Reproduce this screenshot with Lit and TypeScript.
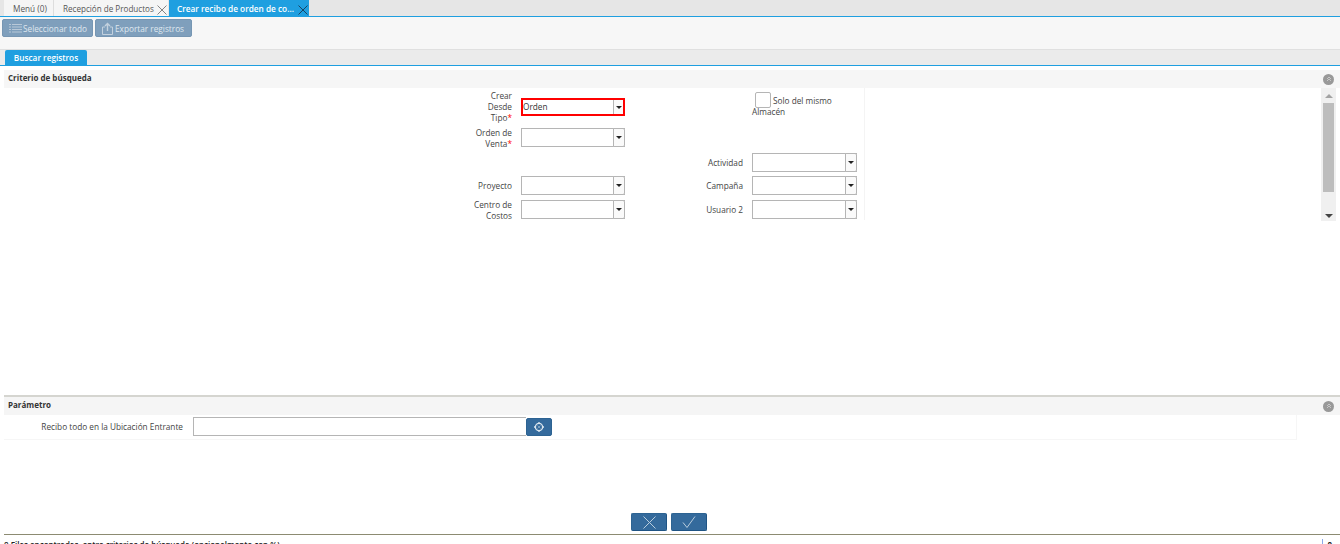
import { LitElement, html, css } from "lit";
import { customElement } from "lit/decorators.js";

const closeIcon = (stroke: string) => html`<svg class="x" viewBox="0 0 10 10" width="10" height="10"><path d="M.5.5l9 9M9.5.5l-9 9" fill="none" stroke=${stroke} stroke-width=".9"/></svg>`;
const collapse = html`<span class="collapse"><svg viewBox="0 0 6 6" width="6" height="6"><path d="M1 3l2-2 2 2M1 5l2-2 2 2" fill="none" stroke="#ccc" stroke-width=".9"/></svg></span>`;

@customElement("app-root")
export class AppRoot extends LitElement {
  static styles = css`
    :host { display: block; width: 1340px; height: 544px; overflow: hidden; background: #fff; color: #333;
      font-family: "Open Sans", sans-serif; font-size: 8.25px; line-height: 11px; }
    .tabs { height: 16px; background: #e6e6e6; border-bottom: 1px solid #1f9fe0; display: flex; padding-left: 4px; box-sizing: content-box; }
    .tab { height: 16px; display: flex; align-items: center; background: #f5f5f5; color: #555; padding: 0 0 0 9px; white-space: nowrap; box-sizing: border-box; }
    .tab .x { align-self: flex-end; margin-bottom: 1px; margin-right: 1px; flex: none; }
    .tab.t1 { width: 50px; border-right: 1px solid #ddd; }
    .tab.t2 { width: 114px; margin-right: 1px; padding-left: 9px; justify-content: space-between; font-size: 8.1px; }
    .tab.t3 { width: 140px; background: #1f9fe0; color: #fff; font-weight: 600; padding-left: 8px; justify-content: space-between; }
    .toolbar { height: 32px; background: #f7f7f7; padding: 2px 0 0 2px; display: flex; gap: 2px; box-sizing: border-box; align-items: flex-start; }
    .tbtn { height: 18px; background: #7f9fbc; border-radius: 2px; color: #dfe7ef; display: flex; align-items: center; box-sizing: border-box; border: 1px solid #7696b3; white-space: nowrap; }
    .tbtn.sel { width: 91px; padding-left: 6px; gap: 1px; }
    .tbtn.exp { width: 97px; padding-left: 6px; gap: 2px; }
    .subtabs { height: 17px; background: #ebebeb; border-top: 1px solid #e0e0e0; border-bottom: 1px solid #1f9fe0; padding-left: 5px; display: flex; align-items: flex-end; box-sizing: border-box; }
    .subtab { width: 82px; height: 15px; background: #1f9fe0; color: #fff; font-weight: 600; display: flex; align-items: center; justify-content: center; border-radius: 2px 2px 0 0; }
    .head { margin-left: 4px; height: 18px; background: #f6f6f6; display: flex; align-items: center; justify-content: space-between; padding: 0 6px 3px 4px; box-sizing: border-box; color: #333; font-weight: 700; font-size: 8px; }
    .collapse { width: 11px; height: 11px; border-radius: 50%; background: #999; display: flex; align-items: center; justify-content: center; margin-top: 2px; margin-bottom: -1px; }
    .g1 { margin-top: 4px; }
    .search { height: 307px; display: flex; justify-content: space-between; align-items: flex-start; }
    .formwrap { margin-left: 462px; width: 403px; height: 132px; border-right: 1px solid #f4f4f4; box-sizing: border-box; }
    .form { display: grid; grid-template-columns: 50px 104px 109px 105px; column-gap: 9px; grid-template-rows: 36px 25px 25px 21px 27px; padding-top: 1px; width: 395px; }
    .form > * { align-self: center; }
    .lab { text-align: right; color: #444; }
    .lab.top { padding-bottom: 2px; }
    .req { color: #f00; }
    .combo { height: 19px; display: flex; box-sizing: border-box; border: 1px solid #b5b5b5; border-right: none; background: #fff; align-items: center; }
    .combo .val { flex: 1; color: #333; }
    .arrow { width: 12px; height: 19px; margin-top: -1px; margin-bottom: -1px; border: 1px solid #b5b5b5; border-radius: 0 2px 2px 0; box-sizing: border-box; display: flex; align-items: center; justify-content: center; background: #fafafa; }
    .arrow i { border: 3px solid transparent; border-top: 3px solid #222; border-bottom: 0; width: 0; height: 0; display: block; }
    .combo.err { height: 18px; border: 2px solid #f00; border-radius: 0; }
    .combo.err .val { padding-bottom: 2px; }
    .combo.err .arrow { border: none; border-left: 1px solid #b5b5b5; height: 14px; width: 10px; margin: 0; border-radius: 0; }
    .check { grid-column: 3 / 5; margin-left: 118px; align-self: start !important; margin-top: 3px; color: #444; }
    .empty { grid-column: 3 / 5; }
    .box { display: inline-block; width: 16px; height: 16px; border: 1px solid #b5b5b5; border-radius: 2px; box-sizing: border-box; vertical-align: -2px; margin: 0 2px -2px 3px; background: #fff; }
    .scroll { width: 15px; height: 133px; margin-right: 4px; background: #f0f0f0; display: flex; flex-direction: column; align-items: center; justify-content: space-between; padding: 6px 0 3px; box-sizing: border-box; position: relative; }
    .thumb { position: absolute; left: 2px; top: 15px; width: 11px; height: 89px; background: #bdbdbd; }
    .up { border: 4px solid transparent; border-bottom: 4px solid #a3a3a3; border-top: 0; width: 0; height: 0; }
    .down { border: 4px solid transparent; border-top: 4px solid #444; border-bottom: 0; width: 0; height: 0; }
    .g2 { border-top: 2px solid #d5d5d0; height: 20px; margin-left: 4px; background: #f5f5f5; display: flex; align-items: center; justify-content: space-between; padding: 0 6px 3px 4px; font-weight: 700; font-size: 8px; box-sizing: border-box; }
    .param { width: 1293px; margin-left: 4px; height: 25px; padding-bottom: 2px; border-bottom: 1px solid #f6f6f6; border-right: 1px solid #f6f6f6; display: flex; align-items: center; box-sizing: border-box; }
    .plab { width: 179px; text-align: right; color: #444; }
    .pinput { margin-left: 10px; width: 333px; height: 19px; border: 1px solid #b5b5b5; border-right: none; box-sizing: border-box; }
    .pbtn { width: 26px; height: 18px; background: #346a9c; border-radius: 2px; display: flex; align-items: center; justify-content: center; border: 1px solid #2d6392; box-sizing: border-box; margin-top: 1px; }
    .actions { height: 18px; margin-top: 73px; display: flex; gap: 4px; padding-left: 631px; }
    .abtn { width: 36px; height: 18px; background: #346a9c; border-radius: 2px; display: flex; align-items: center; justify-content: center; border: 1px solid #2d6392; border-right-color: #1f5484; border-bottom-color: #1f5484; box-sizing: border-box; }
    .status { margin: 3px 0 0 4px; border-top: 1px solid #8c8b72; height: 12px; display: flex; justify-content: space-between; padding-top: 4px; font-weight: 600; font-size: 8px; color: #222; white-space: nowrap; }
    .sep { border-left: 1px solid #8aa8e8; padding-left: 4px; margin-right: 8px; font-weight: 700; }
  `;

  combo(val = "", err = false) {
    return html`<div class="combo ${err ? "err" : ""}"><span class="val">${val}</span><span class="arrow"><i></i></span></div>`;
  }

  render() {
    return html`
      <div class="tabs">
        <div class="tab t1">Menú (0)</div>
        <div class="tab t2">Recepción de Productos ${closeIcon("#777")}</div>
        <div class="tab t3">Crear recibo de orden de co... ${closeIcon("#163a55")}</div>
      </div>
      <div class="toolbar">
        <div class="tbtn sel">
          <svg width="13" height="11" viewBox="0 0 13 11"><path d="M0 1.5h2M3 1.5h10M0 4h2M3 4h10M0 6.5h2M3 6.5h10M0 9h2M3 9h10" stroke="#b9c9d8" stroke-width="1" fill="none"/></svg>
          Seleccionar todo
        </div>
        <div class="tbtn exp">
          <svg width="11" height="13" viewBox="0 0 11 13"><path d="M3 5H.5v7.5h10V5H8" fill="none" stroke="#c3d1de"/><path d="M5.5 9V1.5M3 4l2.5-2.5L8 4" fill="none" stroke="#c3d1de" stroke-width="1.4"/></svg>
          Exportar registros
        </div>
      </div>
      <div class="subtabs"><div class="subtab">Buscar registros</div></div>
      <div class="head g1"><span>Criterio de búsqueda</span>${collapse}</div>
      <div class="search">
        <div class="formwrap">
          <div class="form">
            <div class="lab top">Crear<br />Desde<br />Tipo<span class="req">*</span></div>
            ${this.combo("Orden", true)}
            <div class="check"><span class="box"></span>Solo del mismo<br />Almacén</div>
            <div class="lab">Orden de<br />Venta<span class="req">*</span></div>
            ${this.combo()}
            <div class="empty"></div>
            <div></div><div></div>
            <div class="lab">Actividad</div>
            ${this.combo()}
            <div class="lab">Proyecto</div>
            ${this.combo()}
            <div class="lab">Campaña</div>
            ${this.combo()}
            <div class="lab">Centro de<br />Costos</div>
            ${this.combo()}
            <div class="lab">Usuario 2</div>
            ${this.combo()}
          </div>
        </div>
        <div class="scroll"><span class="up"></span><span class="thumb"></span><span class="down"></span></div>
      </div>
      <div class="g2"><span>Parámetro</span>${collapse}</div>
      <div class="param">
        <div class="plab">Recibo todo en la Ubicación Entrante</div>
        <div class="pinput"></div>
        <div class="pbtn">
          <svg width="10" height="10" viewBox="0 0 10 10"><path d="M3.5 3.5l3 3M6.5 3.5l-3 3" stroke="#8fadc8" stroke-width=".8"/><circle cx="5" cy="5" r="3.6" fill="none" stroke="#dbe5ee" stroke-width="1.3"/><path d="M5 0v2M5 8v2M0 5h2M8 5h2" stroke="#dbe5ee" stroke-width="1.3"/></svg>
        </div>
      </div>
      <div class="actions">
        <div class="abtn"><svg width="13" height="13" viewBox="0 0 13 13"><path d="M.5.5l12 12M12.5.5l-12 12" stroke="#b9cddd" fill="none"/></svg></div>
        <div class="abtn"><svg width="14" height="12" viewBox="0 0 14 12"><path d="M1 6.5l4 5L13 .5" stroke="#b9cddd" fill="none"/></svg></div>
      </div>
      <div class="status"><span>0 Filas encontradas, entre criterios de búsqueda (opcionalmente con %)</span><span class="sep">0</span></div>
    `;
  }
}
